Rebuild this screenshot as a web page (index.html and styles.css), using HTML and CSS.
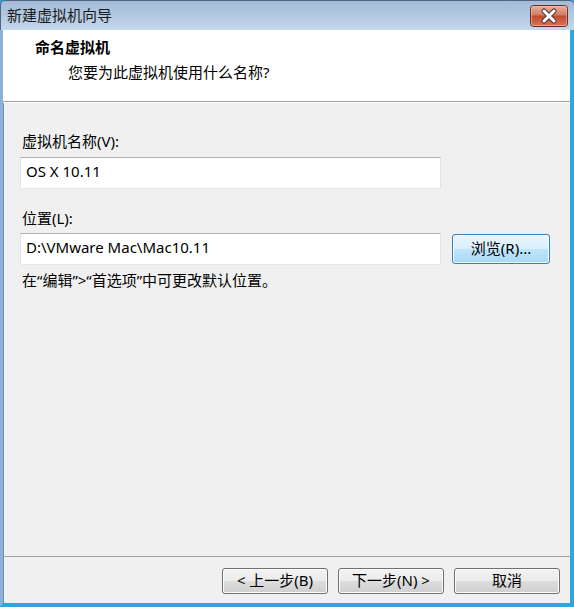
FILE: index.html
```html
<!DOCTYPE html>
<html lang="zh-CN">
<head>
<meta charset="utf-8">
<title>新建虚拟机向导</title>
<link rel="stylesheet" href="styles.css">
</head>
<body>
<div class="window">
  <div class="titlebar">
    <span class="title">新建虚拟机向导</span>
    <span class="close">
      <svg width="38" height="22" viewBox="0 0 38 22">
        <defs>
          <linearGradient id="cg" x1="0" y1="0" x2="0" y2="1">
            <stop offset="0" stop-color="#e8b4a4"/>
            <stop offset="0.45" stop-color="#d27a62"/>
            <stop offset="0.5" stop-color="#c24a2e"/>
            <stop offset="1" stop-color="#d8745a"/>
          </linearGradient>
        </defs>
        <rect x="0.5" y="0.5" width="37" height="21" rx="3" fill="url(#cg)" stroke="#6e2a1c"/>
        <rect x="1.5" y="1.5" width="35" height="19" rx="2" fill="none" stroke="#f0c2b2" stroke-opacity="0.6"/>
        <path d="M14 6 L24 16 M24 6 L14 16" stroke="#4a3a36" stroke-width="5" stroke-linecap="round"/>
        <path d="M14 6 L24 16 M24 6 L14 16" stroke="#ffffff" stroke-width="3" stroke-linecap="round"/>
      </svg>
    </span>
  </div>
  <div class="frame">
    <div class="header">
      <div class="h-title">命名虚拟机</div>
      <div class="h-sub">您要为此虚拟机使用什么名称?</div>
    </div>
    <div class="content">
      <div class="label first">虚拟机名称(V):</div>
      <div class="field">OS X 10.11</div>
      <div class="label second">位置(L):</div>
      <div class="row">
        <div class="field">D:\VMware Mac\Mac10.11</div>
        <div class="btn btn-hot">浏览(R)...</div>
      </div>
      <div class="hint">在“编辑”&gt;“首选项”中可更改默认位置。</div>
    </div>
    <div class="footer">
      <div class="btn">&lt; 上一步(B)</div>
      <div class="btn">下一步(N) &gt;</div>
      <div class="btn">取消</div>
    </div>
  </div>
</div>
</body>
</html>
```

FILE: styles.css
```css
* { box-sizing: border-box; }
html, body { margin: 0; padding: 0; }
body {
  width: 574px;
  height: 607px;
  overflow: hidden;
  font-family: "Noto Sans", "Noto Sans CJK SC", sans-serif;
  font-size: 15px;
  color: #000;
  background: #2ea6de;
}
.window {
  width: 574px;
  height: 607px;
  display: flex;
  flex-direction: column;
}
.titlebar {
  height: 30px;
  display: flex;
  align-items: flex-start;
  background: linear-gradient(#a3bbd7, #b6cce4 60%, #c3d8ee);
  border-top: 1px solid #4f6580;
  border-left: 1px solid #4f6580;
  border-radius: 5px 5px 0 0;
  padding-left: 6px;
  padding-right: 6px;
}
.title {
  line-height: 20px;
  margin-top: 4px;
  color: #1a1a1a;
}
.close {
  margin-left: auto;
  margin-top: 4px;
  height: 22px;
  display: block;
}
.close svg { display: block; }
.frame {
  flex: 1;
  display: flex;
  flex-direction: column;
  border-left: 3px solid #8eb0d6;
  border-right: 4px solid #2ea6de;
  border-bottom: 4px solid #2ea6de;
  box-shadow: inset 1px 0 0 #6c8fb8;
  background: #f0f0f0;
  position: relative;
}
.header {
  height: 72px;
  background: #fff;
  border-bottom: 1px solid #a0a0a0;
  padding-left: 32px;
  padding-top: 7px;
}
.h-title {
  font-weight: bold;
  line-height: 20px;
}
.h-sub {
  line-height: 20px;
  margin-top: 5px;
  padding-left: 33px;
}
.content {
  flex: 1;
  padding-left: 17px;
  border-top: 1px solid #fff;
}
.label {
  line-height: 20px;
  padding-left: 2px;
}
.label.first { margin-top: 28px; margin-bottom: 6px; }
.label.second { margin-top: 19px; margin-bottom: 5px; }
.field {
  width: 421px;
  height: 32px;
  background: #fff;
  border: 1px solid #e2e3ea;
  border-top-color: #abadb3;
  border-bottom-color: #e3e9ef;
  padding-left: 5px;
  line-height: 26px;
  white-space: nowrap;
}
.row {
  display: flex;
  align-items: center;
  gap: 11px;
}
.hint {
  line-height: 20px;
  margin-top: 5px;
  padding-left: 2px;
}
.btn {
  width: 106px;
  height: 26px;
  border: 1px solid #707070;
  border-radius: 3px;
  background: linear-gradient(#f2f2f2, #ebebeb 50%, #dddddd 50%, #cfcfcf);
  box-shadow: inset 0 0 0 1px #fcfcfc;
  text-align: center;
  line-height: 23px;
  white-space: nowrap;
}
.btn-hot {
  width: 98px;
  height: 30px;
  line-height: 27px;
  border-color: #3c7fb1;
  background: linear-gradient(#eaf6fd, #d9f0fc 50%, #bee6fd 50%, #a7d9f5);
  box-shadow: inset 0 0 0 1px #f4fbff;
}
.footer {
  height: 47px;
  border-top: 1px solid #a0a0a0;
  display: flex;
  justify-content: flex-end;
  gap: 10px;
  padding-top: 11px;
  padding-right: 10px;
}
```
